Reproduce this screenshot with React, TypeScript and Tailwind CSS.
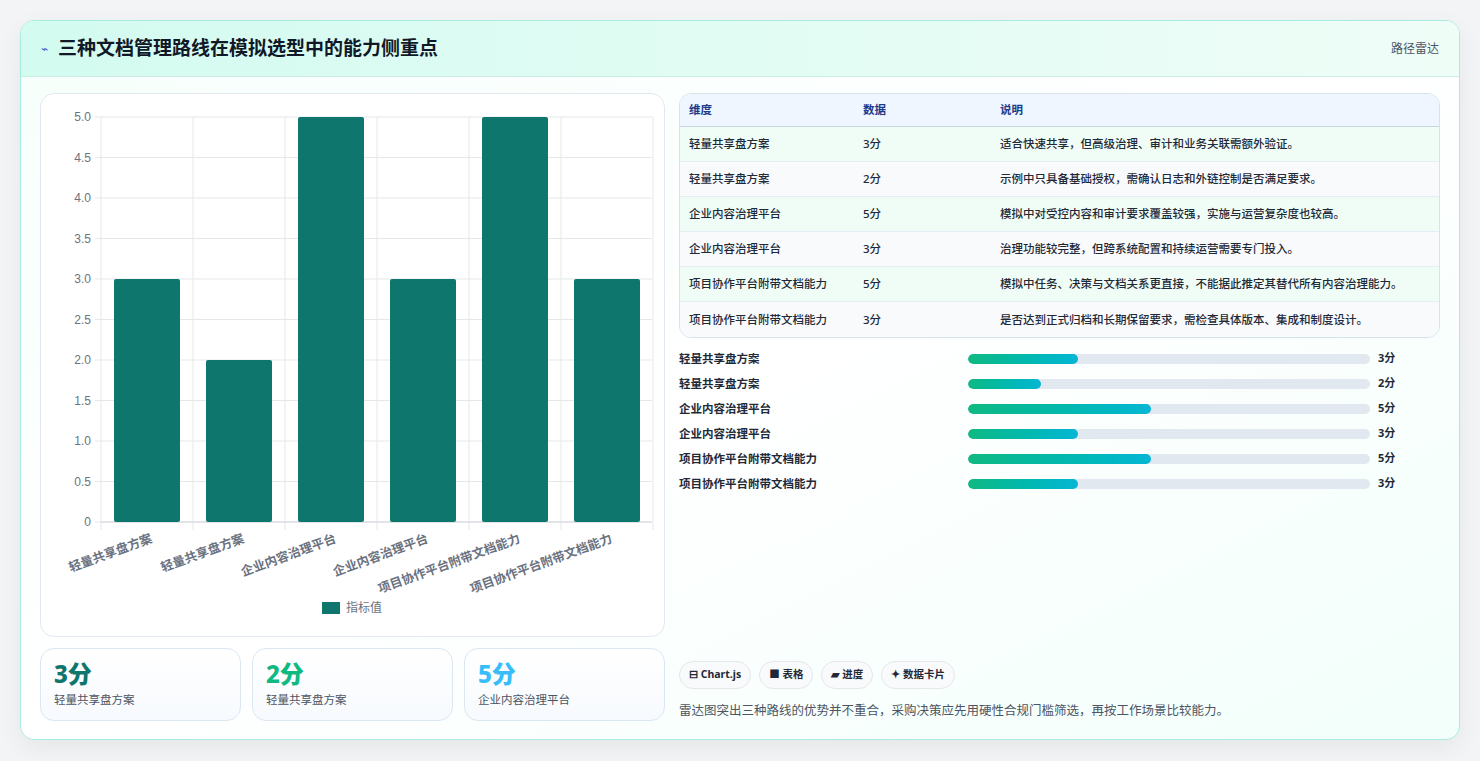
import React from "react";

const bars = [
  { l: "轻量共享盘方案", v: 3 },
  { l: "轻量共享盘方案", v: 2 },
  { l: "企业内容治理平台", v: 5 },
  { l: "企业内容治理平台", v: 3 },
  { l: "项目协作平台附带文档能力", v: 5 },
  { l: "项目协作平台附带文档能力", v: 3 },
];
const rows = [
  ["轻量共享盘方案", "3分", "适合快速共享，但高级治理、审计和业务关联需额外验证。"],
  ["轻量共享盘方案", "2分", "示例中只具备基础授权，需确认日志和外链控制是否满足要求。"],
  ["企业内容治理平台", "5分", "模拟中对受控内容和审计要求覆盖较强，实施与运营复杂度也较高。"],
  ["企业内容治理平台", "3分", "治理功能较完整，但跨系统配置和持续运营需要专门投入。"],
  ["项目协作平台附带文档能力", "5分", "模拟中任务、决策与文档关系更直接，不能据此推定其替代所有内容治理能力。"],
  ["项目协作平台附带文档能力", "3分", "是否达到正式归档和长期保留要求，需检查具体版本、集成和制度设计。"],
];

function Chart() {
  const x0 = 60, w = 92, top = 23, unit = 81;
  const ticks = [0, 0.5, 1, 1.5, 2, 2.5, 3, 3.5, 4, 4.5, 5];
  return (
    <svg width="622" height="541" className="block">
      {ticks.map((t) => {
        const y = top + (5 - t) * unit;
        return (
          <g key={t}>
            <line x1={x0 - 6} x2={611} y1={y} y2={y} stroke="#e5e7eb" />
            <text x={x0 - 10} y={y + 4} textAnchor="end" fontSize="12" fill="#6b7280" fontFamily="Liberation Sans, sans-serif">
              {t === 0 ? "0" : t.toFixed(1)}
            </text>
          </g>
        );
      })}
      {[0, 1, 2, 3, 4, 5, 6].map((i) => (
        <line key={i} x1={x0 + i * w} x2={x0 + i * w} y1={top} y2={top + 5 * unit + 8} stroke="#e5e7eb" />
      ))}
      <line x1={x0} x2={611} y1={top + 5 * unit} y2={top + 5 * unit} stroke="#d1d5db" />
      {bars.map((b, i) => {
        const h = b.v * unit;
        const cx = x0 + i * w + w / 2;
        return (
          <g key={i}>
            <rect x={cx - 33} y={top + 5 * unit - h} width={66} height={h} rx={2} fill="#0f766e" />
            <text
              x={cx + 6}
              y={top + 5 * unit + 20}
              textAnchor="end"
              fontSize="12.5"
              fontWeight="700"
              fill="#6b7280"
              transform={`rotate(-20 ${cx + 6} ${top + 5 * unit + 20})`}
              fontFamily="Noto Sans CJK SC, sans-serif"
            >
              {b.l}
            </text>
          </g>
        );
      })}
      <rect x={281} y={508} width={18} height={12} fill="#0f766e" />
      <text x={305} y={518} fontSize="12" fill="#6b7280" fontFamily="Noto Sans CJK SC, sans-serif">指标值</text>
    </svg>
  );
}

export default function App() {
  return (
    <div className="w-[1480px] h-[761px] bg-[#f3f4f6] p-[20px] pb-0" style={{ fontFamily: '"Noto Sans", "Noto Sans CJK SC", sans-serif' }}>
      <div className="h-[720px] rounded-[14px] border border-[#a7ecdf] bg-gradient-to-br from-[#f6fffb] via-white to-[#f2fffb] shadow-[0_8px_24px_rgba(0,0,0,0.06)] overflow-hidden flex flex-col">
        <div className="h-[56px] shrink-0 flex items-center justify-between px-[20px] bg-gradient-to-r from-[#d3fbf0] to-[#effdf7] border-b border-[#cdeee6]">
          <div className="flex items-center gap-[10px]">
            <span className="text-[12px] text-[#3b5bdb]">⌁</span>
            <span className="text-[19px] font-bold text-[#111827]">三种文档管理路线在模拟选型中的能力侧重点</span>
          </div>
          <span className="text-[12px] text-[#4b5563]">路径雷达</span>
        </div>
        <div className="flex-1 flex gap-[14px] px-[19px] pt-[16px] pb-[19px]">
          <div className="w-[625px] flex flex-col gap-[11px]">
            <div className="h-[544px] rounded-[14px] border border-[#e2e8f0] bg-white overflow-hidden">
              <Chart />
            </div>
            <div className="flex gap-[11px]">
              {[
                ["3分", "轻量共享盘方案", "text-[#0f766e]"],
                ["2分", "轻量共享盘方案", "text-[#10b981]"],
                ["5分", "企业内容治理平台", "text-[#38bdf8]"],
              ].map(([v, l, c], i) => (
                <div key={i} className="flex-1 h-[73px] rounded-[14px] border border-[#dbe7f3] bg-gradient-to-b from-white to-[#f7fafe] px-[13px] pt-[10px]">
                  <div className={`text-[24px] font-extrabold leading-[30px] ${c}`}>{v}</div>
                  <div className="text-[11.5px] text-[#4b5563] mt-[2px]">{l}</div>
                </div>
              ))}
            </div>
          </div>
          <div className="flex-1 flex flex-col">
            <div className="rounded-[12px] border border-[#d6e3ee] overflow-hidden text-[11.5px] bg-white">
              <div className="flex h-[33px] items-center bg-[#eff6ff] border-b border-[#cbd5e1] text-[#1e3a8a] font-semibold">
                <div className="w-[183px] pl-[9px]">维度</div>
                <div className="w-[137px]">数据</div>
                <div className="flex-1">说明</div>
              </div>
              {rows.map((r, i) => (
                <div key={i} className={`flex h-[35px] items-center text-[#1f2937] font-medium ${i % 2 === 0 ? "bg-[#f0fdf6]" : "bg-[#f8fafc]"} ${i < 5 ? "border-b border-[#e5edf3]" : ""}`}>
                  <div className="w-[183px] pl-[9px]">{r[0]}</div>
                  <div className="w-[137px]">{r[1]}</div>
                  <div className="flex-1">{r[2]}</div>
                </div>
              ))}
            </div>
            <div className="flex flex-col mt-[8px]">
              {bars.map((b, i) => (
                <div key={i} className="flex items-center h-[25px] text-[11.5px] font-semibold text-[#1f2937]">
                  <div className="w-[289px]">{b.l}</div>
                  <div className="w-[402px] h-[10px] rounded-full bg-[#e2e8f0] overflow-hidden">
                    <div className="h-full rounded-full bg-gradient-to-r from-[#10b981] to-[#06b6d4]" style={{ width: `${(b.v / 11) * 100}%` }} />
                  </div>
                  <div className="ml-[8px] font-bold text-[11px]">{b.v}分</div>
                </div>
              ))}
            </div>
            <div className="flex-1" />
            <div className="flex gap-[8px] text-[10.5px] font-bold text-[#1f2937]">
              {["⊟ Chart.js", "■ 表格", "▰ 进度", "✦ 数据卡片"].map((p) => (
                <span key={p} className="h-[28px] px-[9px] flex items-center rounded-full border border-[#e5e7eb] bg-[#f9fafb]">{p}</span>
              ))}
            </div>
            <div className="mt-[13px] text-[12.5px] text-[#4b5563]">雷达图突出三种路线的优势并不重合，采购决策应先用硬性合规门槛筛选，再按工作场景比较能力。</div>
          </div>
        </div>
      </div>
    </div>
  );
}
